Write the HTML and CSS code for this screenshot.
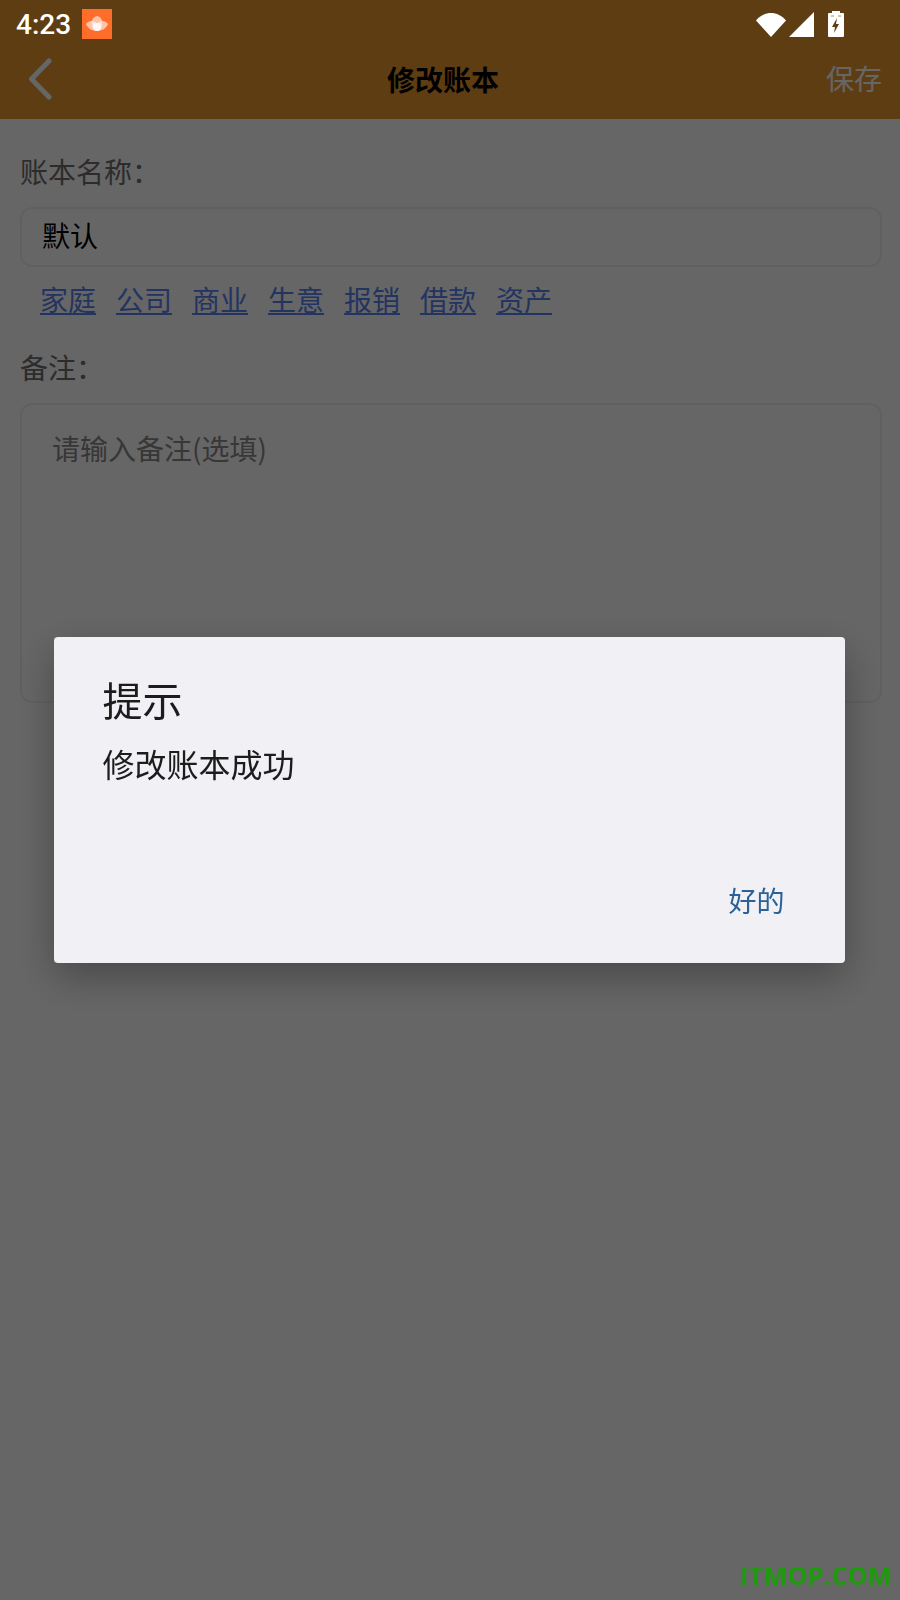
FILE: index.html

```html
<!DOCTYPE html>
<html lang="zh-CN">
<head>
  <meta charset="UTF-8" />
  <title>修改账本</title>
  <link rel="stylesheet" href="styles.css">
</head>
<body>
  <div class="status-bar">
    <span class="time">4:23</span>
    <svg class="app-icon" width="30" height="30" viewBox="0 0 30 30">
      <rect width="30" height="30" fill="#ff6d2a" />
      <path d="M4 15C7 11 12 11 15 15C18 11 23 11 26 15C24 20 19 22 15 22C11 22 6 20 4 15Z" fill="#fff" opacity=".6" />
      <path d="M15 7C19 8 21 11 20 15C20 19 18 22 15 22C12 22 10 19 10 15C9 11 11 8 15 7Z" fill="#fff" opacity=".6" />
      <ellipse cx="15" cy="18" rx="4" ry="4" fill="#fff" opacity=".7" />
    </svg>
    <div class="status-icons">
      <svg width="30" height="25" viewBox="0 0 30 25"><path d="M0 8.500C8 -1.500 22 -1.500 30 8.500L15 25Z" fill="#fff" /></svg>
      <svg class="signal" width="25" height="25" viewBox="0 0 25 25"><path d="M25 0V25H0Z" fill="#fff" /></svg>
      <svg class="battery" width="16" height="26" viewBox="0 0 16 26">
        <path d="M4 0H12V2H15A1 1 0 0 1 16 3V25A1 1 0 0 1 15 26H1A1 1 0 0 1 0 25V3A1 1 0 0 1 1 2H4Z" fill="#fff" />
        <path d="M3 5H6M10 5H13" stroke="#5e3d12" stroke-width="1" opacity=".6" />
        <path d="M9 7L4 16H7L6 22L11 13H8Z" fill="#5e3d12" />
      </svg>
    </div>
  </div>

  <div class="toolbar">
    <svg class="back" width="26" height="44" viewBox="0 0 26 44"><path d="M22 5L4.500 23L22 41" fill="none" stroke="#fff" stroke-width="5" stroke-linecap="round" stroke-linejoin="round" /></svg>
    <h1>修改账本</h1>
    <span class="save">保存</span>
  </div>

  <div class="form">
    <div class="label">账本名称：</div>
    <input class="name-input" type="text" value="默认" />
    <div class="tags">
      <a href="#">家庭</a>
      <a href="#">公司</a>
      <a href="#">商业</a>
      <a href="#">生意</a>
      <a href="#">报销</a>
      <a href="#">借款</a>
      <a href="#">资产</a>
    </div>
    <div class="label label-note">备注：</div>
    <textarea class="note-input" placeholder="请输入备注(选填)"></textarea>
  </div>

  <div class="overlay">
    <div class="dialog">
      <div class="dialog-title">提示</div>
      <div class="dialog-text">修改账本成功</div>
      <div class="dialog-actions"><span class="dialog-btn">好的</span></div>
    </div>
  </div>

  <div class="watermark">ITMOP.COM</div>
</body>
</html>
```

FILE: styles.css

```css
* { box-sizing: border-box; }
html, body { height: 100%; }
body { margin: 0; height: 1600px; overflow: hidden; background: #fff; font-family: "Noto Sans CJK SC", "Noto Sans", sans-serif; color: #000; }

.status-bar { position: relative; z-index: 2; display: flex; align-items: center; height: 48px; padding: 0 56px 0 16px; background: #5e3d12; }
.time { font-family: Roboto, sans-serif; font-size: 28px; font-weight: 500; color: #fff; }
.app-icon { margin-left: 11px; }
.status-icons { display: flex; align-items: center; margin-left: auto; }
.signal { margin-left: 3px; }
.battery { margin-left: 14px; }

.toolbar { position: relative; display: flex; align-items: center; justify-content: center; height: 71px; padding: 0 14px 10px 0; background: #eb982d; }
.toolbar h1 { margin: 0; font-size: 28px; font-weight: 700; }
.back { position: absolute; left: 27px; top: 8px; }
.save { position: absolute; right: 18px; top: 10px; font-size: 28px; color: #fff; }

.form { padding: 0 18px 0 20px; }
.label { font-size: 28px; line-height: 40px; color: #6e6e6e; }
.form > .label:first-child { margin-top: 32px; }
.label-note { margin-top: 16px; }
.name-input { display: block; width: 100%; height: 60px; margin-top: 16px; padding: 0 20px 4px; border: 2px solid #f0f0f0; border-radius: 12px; font: inherit; font-size: 28px; color: #000; }
.tags { display: flex; gap: 20px; height: 64px; padding: 0 0 0 20px; align-items: center; }
.tags a { font-size: 28px; color: #5a82f0; }
.note-input { display: block; width: 100%; height: 300px; margin-top: 16px; padding: 23px 30px; border: 2px solid #f0f0f0; border-radius: 12px; font: inherit; font-size: 28px; resize: none; }
.note-input::placeholder { color: #8a8a8a; opacity: 1; }

.overlay { position: fixed; inset: 0; z-index: 1; display: flex; align-items: center; justify-content: center; background: rgba(0, 0, 0, .6); }
.dialog { display: flex; flex-direction: column; width: 791px; height: 326px; margin-right: 2px; padding: 32px 60px 0 49px; background: #f0f0f5; border-radius: 4px; box-shadow: 0 14px 40px rgba(0, 0, 0, .3); color: #1c1c1c; }
.dialog-title { font-size: 40px; line-height: 60px; }
.dialog-text { font-size: 32px; line-height: 46px; margin-top: 11px; }
.dialog-actions { display: flex; justify-content: flex-end; margin-top: 94px; }
.dialog-btn { font-size: 28px; color: #2a6197; }

.watermark { position: fixed; right: 8px; bottom: 9px; z-index: 3; font-family: "Open Sans", sans-serif; font-size: 25.600px; font-weight: 700; line-height: 30px; color: #1f9a0f; }
```
